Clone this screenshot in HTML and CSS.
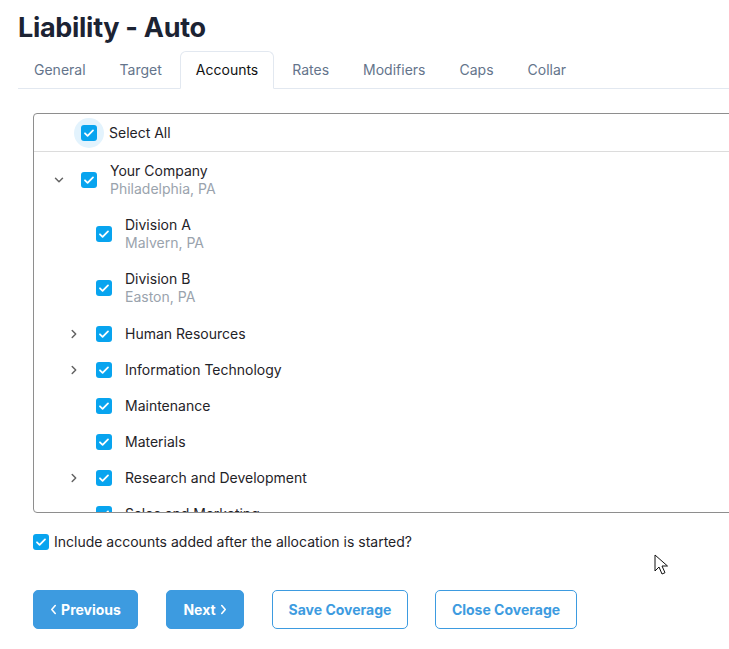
FILE: index.html
```html
<!DOCTYPE html>
<html lang="en">
<head>
<meta charset="utf-8">
<title>Liability - Auto</title>
<link rel="stylesheet" href="styles.css">
</head>
<body>
<div class="page">
  <h1 class="title">Liability - Auto</h1>
  <ul class="tabs">
    <li class="tab">General</li>
    <li class="tab">Target</li>
    <li class="tab active">Accounts</li>
    <li class="tab">Rates</li>
    <li class="tab">Modifiers</li>
    <li class="tab">Caps</li>
    <li class="tab">Collar</li>
  </ul>

  <div class="tree-box">
    <div class="select-all">
      <span class="halo"><span class="cb"><svg viewBox="0 0 16 16"><path d="M4 8.3l2.6 2.5L12 5.4"/></svg></span></span>
      <span class="label">Select All</span>
    </div>
    <div class="tree">
      <div class="row lvl1 two">
        <span class="chev"><svg viewBox="0 0 10 10"><path d="M1.5 3.2L5 6.7l3.5-3.5"/></svg></span>
        <span class="cb"><svg viewBox="0 0 16 16"><path d="M4 8.3l2.6 2.5L12 5.4"/></svg></span>
        <span class="text"><span class="name">Your Company</span><span class="sub">Philadelphia, PA</span></span>
      </div>
      <div class="row lvl2 two">
        <span class="chev"></span>
        <span class="cb"><svg viewBox="0 0 16 16"><path d="M4 8.3l2.6 2.5L12 5.4"/></svg></span>
        <span class="text"><span class="name">Division A</span><span class="sub">Malvern, PA</span></span>
      </div>
      <div class="row lvl2 two">
        <span class="chev"></span>
        <span class="cb"><svg viewBox="0 0 16 16"><path d="M4 8.3l2.6 2.5L12 5.4"/></svg></span>
        <span class="text"><span class="name">Division B</span><span class="sub">Easton, PA</span></span>
      </div>
      <div class="row lvl2">
        <span class="chev"><svg viewBox="0 0 10 10"><path d="M3.2 1.5L6.7 5 3.2 8.5"/></svg></span>
        <span class="cb"><svg viewBox="0 0 16 16"><path d="M4 8.3l2.6 2.5L12 5.4"/></svg></span>
        <span class="text"><span class="name">Human Resources</span></span>
      </div>
      <div class="row lvl2">
        <span class="chev"><svg viewBox="0 0 10 10"><path d="M3.2 1.5L6.7 5 3.2 8.5"/></svg></span>
        <span class="cb"><svg viewBox="0 0 16 16"><path d="M4 8.3l2.6 2.5L12 5.4"/></svg></span>
        <span class="text"><span class="name">Information Technology</span></span>
      </div>
      <div class="row lvl2">
        <span class="chev"></span>
        <span class="cb"><svg viewBox="0 0 16 16"><path d="M4 8.3l2.6 2.5L12 5.4"/></svg></span>
        <span class="text"><span class="name">Maintenance</span></span>
      </div>
      <div class="row lvl2">
        <span class="chev"></span>
        <span class="cb"><svg viewBox="0 0 16 16"><path d="M4 8.3l2.6 2.5L12 5.4"/></svg></span>
        <span class="text"><span class="name">Materials</span></span>
      </div>
      <div class="row lvl2">
        <span class="chev"><svg viewBox="0 0 10 10"><path d="M3.2 1.5L6.7 5 3.2 8.5"/></svg></span>
        <span class="cb"><svg viewBox="0 0 16 16"><path d="M4 8.3l2.6 2.5L12 5.4"/></svg></span>
        <span class="text"><span class="name">Research and Development</span></span>
      </div>
      <div class="row lvl2">
        <span class="chev"></span>
        <span class="cb"><svg viewBox="0 0 16 16"><path d="M4 8.3l2.6 2.5L12 5.4"/></svg></span>
        <span class="text"><span class="name">Sales and Marketing</span></span>
      </div>
    </div>
  </div>

  <div class="include">
    <span class="cb"><svg viewBox="0 0 16 16"><path d="M4 8.3l2.6 2.5L12 5.4"/></svg></span>
    <span class="label">Include accounts added after the allocation is started?</span>
  </div>

  <div class="actions">
    <button class="btn btn-solid btn-prev"><svg class="bchev" viewBox="0 0 8 12"><path d="M6 1.5L2 6l4 4.5"/></svg>Previous</button>
    <button class="btn btn-solid btn-next">Next<svg class="bchev" viewBox="0 0 8 12"><path d="M2 1.5L6 6l-4 4.5"/></svg></button>
    <button class="btn btn-outline btn-save">Save Coverage</button>
    <button class="btn btn-outline btn-close">Close Coverage</button>
  </div>
</div>

<svg class="cursor" viewBox="0 0 14 22" width="14" height="22"><path d="M1 1v16l4-4 3 7 3-1.3-3-6.7h5.5z" fill="#fff" stroke="#111" stroke-width="1" stroke-linejoin="round"/></svg>
</body>
</html>
```

FILE: styles.css
```css
html, body {
  margin: 0;
  padding: 0;
  background: #fff;
  overflow: hidden;
}

body {
  font-family: "Inter", "Noto Sans", "Liberation Sans", sans-serif;
  color: #1f2328;
  position: relative;
  min-height: 649px;
}

.page {
  width: 780px;
  padding: 11px 0 0 18px;
}

.title {
  margin: 0;
  font-size: 27px;
  line-height: 34px;
  font-weight: 700;
  color: #1c2333;
  letter-spacing: -0.3px;
}

.tabs {
  list-style: none;
  margin: 6px 0 0 0;
  padding: 0;
  display: flex;
  gap: 2px;
  border-bottom: 1px solid #e2e8f0;
}

.tab {
  padding: 8px 15px;
  font-size: 14px;
  line-height: 20px;
  color: #64748b;
  border: 1px solid transparent;
  border-radius: 6px 6px 0 0;
  margin-bottom: -1px;
}

.tab.active {
  color: #111;
  background: #fff;
  border-color: #e2e8f0 #e2e8f0 #fff;
}

.tree-box {
  margin: 24px 0 0 15px;
  height: 398px;
  border: 1px solid #8e8e8e;
  border-radius: 4px;
  overflow: hidden;
}

.select-all {
  height: 37px;
  display: flex;
  align-items: center;
  border-bottom: 1px solid #dcdcdc;
  padding-left: 40px;
  font-size: 14px;
}

.halo {
  width: 30px;
  height: 30px;
  border-radius: 50%;
  background: #e3f3fd;
  display: flex;
  align-items: center;
  justify-content: center;
  margin-right: 5px;
}

.cb {
  width: 16px;
  height: 16px;
  border-radius: 3px;
  background: #08a4ef;
  display: inline-flex;
  flex: none;
}

.cb svg {
  width: 16px;
  height: 16px;
  fill: none;
  stroke: #fff;
  stroke-width: 1.8;
  stroke-linecap: round;
  stroke-linejoin: round;
}

.label {
  font-size: 14px;
  color: #1f2328;
}

.tree {
  padding-top: 1px;
}

.row {
  display: flex;
  align-items: center;
  padding: 9.5px 0 8.5px;
  font-size: 14px;
}

.row.two {
  padding: 9px 0;
}

.row.lvl1 { padding-left: 13px; }
.row.lvl2 { padding-left: 28px; }

.chev {
  width: 24px;
  height: 18px;
  margin-right: 10px;
  display: flex;
  align-items: center;
  justify-content: center;
  flex: none;
}

.chev svg {
  width: 10px;
  height: 10px;
  fill: none;
  stroke: #666;
  stroke-width: 1.5;
  stroke-linecap: round;
  stroke-linejoin: round;
}

.text {
  margin-left: 13px;
  display: flex;
  flex-direction: column;
  line-height: 18px;
}

.name { color: #1f2328; }
.sub { color: #9aa3ad; }

.include {
  margin-top: 20px;
  margin-left: 15px;
  display: flex;
  align-items: center;
  height: 18px;
}

.include .cb { margin-right: 5px; }

.include .label {
  font-size: 14px;
  line-height: 18px;
}

.actions {
  margin: 39px 0 0 15px;
  display: flex;
  gap: 28px;
}

.btn {
  height: 39px;
  padding: 0;
  border-radius: 5px;
  font-family: "Inter", "Noto Sans", "Liberation Sans", sans-serif;
  font-size: 14px;
  font-weight: 700;
  display: inline-flex;
  align-items: center;
  justify-content: center;
  gap: 4px;
  cursor: pointer;
}

.btn-solid {
  background: #3d9be0;
  border: 1px solid #3d9be0;
  color: #fff;
}

.btn-prev { width: 105px; }
.btn-next { width: 78px; }
.btn-save { width: 136px; }
.btn-close { width: 142px; margin-left: -1px; }

.btn-outline {
  background: #fff;
  border: 1px solid #3d9be0;
  color: #3d9be0;
}

.bchev {
  width: 7px;
  height: 11px;
  fill: none;
  stroke: #fff;
  stroke-width: 1.8;
  stroke-linecap: round;
  stroke-linejoin: round;
}

.cursor {
  position: absolute;
  left: 654px;
  top: 554px;
}
```
